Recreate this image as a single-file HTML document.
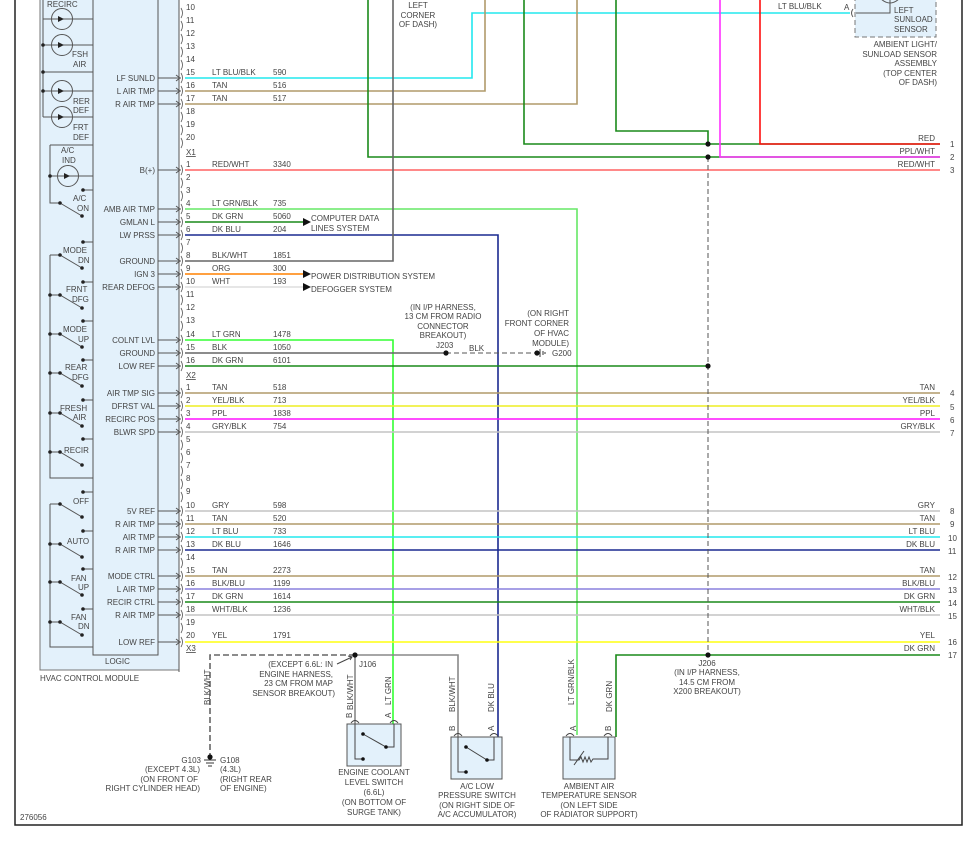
<!DOCTYPE html>
<html><head><meta charset="utf-8"><style>
html,body{margin:0;padding:0;background:#fff;}
svg{display:block;}
text{font-family:"Liberation Sans",Arial,sans-serif;font-size:8px;fill:#444;}
.r{text-anchor:end;}
.m{text-anchor:middle;}
</style></head><body>
<svg width="967" height="841" viewBox="0 0 967 841" xmlns="http://www.w3.org/2000/svg">
<rect x="0" y="0" width="967" height="841" fill="#fff"/>
<!-- frame -->
<path d="M15,0 V825 H962 V0" fill="none" stroke="#222" stroke-width="1.5"/>

<!-- module -->
<rect x="40" y="-2" width="139" height="672" fill="#e3f1fb" stroke="#777" stroke-width="1"/>
<rect x="93" y="-2" width="65" height="657" fill="#e3f1fb" stroke="#555" stroke-width="1"/>
<text x="105" y="664">LOGIC</text>
<text x="40" y="681">HVAC CONTROL MODULE</text>

<!-- LED section -->
<g stroke="#555" fill="none" stroke-width="1">
<path d="M43,0 V72 M43,19 H93 M43,45 H93 M43,72 H93 M43,91 H93 M43,117 H93 M43,91 V117"/>
<path d="M43,72 V91"/>
<circle cx="62" cy="19" r="10.5"/><circle cx="62" cy="45" r="10.5"/>
<circle cx="62" cy="91" r="10.5"/><circle cx="62" cy="117" r="10.5"/>
<path d="M50,145 H93 M50,145 V203 H60 M50,176 H93 M83,190 H93"/>
<circle cx="68" cy="176" r="10.5"/>
<path d="M60,203 L82,216"/>
</g>
<g fill="#222">
<circle cx="43" cy="45" r="1.8"/><circle cx="43" cy="72" r="1.8"/><circle cx="43" cy="91" r="1.8"/>
<circle cx="50" cy="176" r="1.8"/><circle cx="83" cy="190" r="1.8"/><circle cx="60" cy="203" r="1.8"/><circle cx="82" cy="216" r="1.8"/>
<path d="M58,16 l6,3 l-6,3z M58,42 l6,3 l-6,3z M58,88 l6,3 l-6,3z M58,114 l6,3 l-6,3z M64,173 l6,3 l-6,3z"/>
</g>
<text x="47" y="7">RECIRC</text>
<text x="72" y="57">FSH</text><text x="73" y="67">AIR</text>
<text x="73" y="104">RER</text><text x="73" y="113">DEF</text>
<text x="73" y="130">FRT</text><text x="73" y="140">DEF</text>
<text x="61" y="153">A/C</text><text x="62" y="163">IND</text>
<text x="73" y="201">A/C</text><text x="77" y="211">ON</text>

<!-- switch groups -->
<g stroke="#555" fill="none" stroke-width="1">
<path d="M50,255 V478 H93 M50,504 V647 H93"/>
<path d="M83,242 H93 M50,255 H60 L82,268
M83,282 H93 M50,295 H60 L82,308
M83,321 H93 M50,334 H60 L82,347
M83,360 H93 M50,373 H60 L82,386
M83,400 H93 M50,413 H60 L82,426
M83,439 H93 M50,452 H60 L82,465
M83,492 H93 M50,504 H60 L82,517
M83,531 H93 M50,544 H60 L82,557
M83,569 H93 M50,582 H60 L82,595
M83,609 H93 M50,622 H60 L82,635"/>
</g>
<g fill="#222">
<circle cx="83" cy="242" r="1.8"/><circle cx="60" cy="255" r="1.8"/><circle cx="82" cy="268" r="1.8"/>
<circle cx="83" cy="282" r="1.8"/><circle cx="60" cy="295" r="1.8"/><circle cx="82" cy="308" r="1.8"/><circle cx="50" cy="295" r="1.8"/>
<circle cx="83" cy="321" r="1.8"/><circle cx="60" cy="334" r="1.8"/><circle cx="82" cy="347" r="1.8"/><circle cx="50" cy="334" r="1.8"/>
<circle cx="83" cy="360" r="1.8"/><circle cx="60" cy="373" r="1.8"/><circle cx="82" cy="386" r="1.8"/><circle cx="50" cy="373" r="1.8"/>
<circle cx="83" cy="400" r="1.8"/><circle cx="60" cy="413" r="1.8"/><circle cx="82" cy="426" r="1.8"/><circle cx="50" cy="413" r="1.8"/>
<circle cx="83" cy="439" r="1.8"/><circle cx="60" cy="452" r="1.8"/><circle cx="82" cy="465" r="1.8"/><circle cx="50" cy="452" r="1.8"/>
<circle cx="83" cy="492" r="1.8"/><circle cx="60" cy="504" r="1.8"/><circle cx="82" cy="517" r="1.8"/>
<circle cx="83" cy="531" r="1.8"/><circle cx="60" cy="544" r="1.8"/><circle cx="82" cy="557" r="1.8"/><circle cx="50" cy="544" r="1.8"/>
<circle cx="83" cy="569" r="1.8"/><circle cx="60" cy="582" r="1.8"/><circle cx="82" cy="595" r="1.8"/><circle cx="50" cy="582" r="1.8"/>
<circle cx="83" cy="609" r="1.8"/><circle cx="60" cy="622" r="1.8"/><circle cx="82" cy="635" r="1.8"/><circle cx="50" cy="622" r="1.8"/>
</g>
<text x="63" y="253">MODE</text><text x="78" y="263">DN</text>
<text x="66" y="292">FRNT</text><text x="72" y="302">DFG</text>
<text x="63" y="332">MODE</text><text x="78" y="342">UP</text>
<text x="65" y="370">REAR</text><text x="72" y="380">DFG</text>
<text x="60" y="411">FRESH</text><text x="73" y="420">AIR</text>
<text x="64" y="453">RECIR</text>
<text x="73" y="504">OFF</text>
<text x="67" y="544">AUTO</text>
<text x="71" y="581">FAN</text><text x="78" y="590">UP</text>
<text x="71" y="620">FAN</text><text x="78" y="629">DN</text>

<!-- module pin labels & arrows -->
<g stroke="#555" stroke-width="1" fill="none">
<path d="M158,78H181M158,91H181M158,104H181M158,170H181M158,209H181M158,222H181M158,235H181M158,261H181M158,274H181M158,287H181M158,340H181M158,353H181M158,366H181M158,393H181M158,406H181M158,419H181M158,432H181M158,511H181M158,524H181M158,537H181M158,550H181M158,576H181M158,589H181M158,602H181M158,615H181M158,642H181"/>
<path d="M176,75l4,3l-4,3M176,88l4,3l-4,3M176,101l4,3l-4,3M176,167l4,3l-4,3M176,206l4,3l-4,3M176,219l4,3l-4,3M176,232l4,3l-4,3M176,258l4,3l-4,3M176,271l4,3l-4,3M176,284l4,3l-4,3M176,337l4,3l-4,3M176,350l4,3l-4,3M176,363l4,3l-4,3M176,390l4,3l-4,3M176,403l4,3l-4,3M176,416l4,3l-4,3M176,429l4,3l-4,3M176,508l4,3l-4,3M176,521l4,3l-4,3M176,534l4,3l-4,3M176,547l4,3l-4,3M176,573l4,3l-4,3M176,586l4,3l-4,3M176,599l4,3l-4,3M176,612l4,3l-4,3M176,639l4,3l-4,3"/>
<path d="M179,-3V672"/>
</g>
<g class="r">
<text class="r" x="155" y="81">LF SUNLD</text><text class="r" x="155" y="94">L AIR TMP</text><text class="r" x="155" y="107">R AIR TMP</text>
<text class="r" x="155" y="173">B(+)</text><text class="r" x="155" y="212">AMB AIR TMP</text><text class="r" x="155" y="225">GMLAN L</text><text class="r" x="155" y="238">LW PRSS</text>
<text class="r" x="155" y="264">GROUND</text><text class="r" x="155" y="277">IGN 3</text><text class="r" x="155" y="290">REAR DEFOG</text>
<text class="r" x="155" y="343">COLNT LVL</text><text class="r" x="155" y="356">GROUND</text><text class="r" x="155" y="369">LOW REF</text>
<text class="r" x="155" y="396">AIR TMP SIG</text><text class="r" x="155" y="409">DFRST VAL</text><text class="r" x="155" y="422">RECIRC POS</text><text class="r" x="155" y="435">BLWR SPD</text>
<text class="r" x="155" y="514">5V REF</text><text class="r" x="155" y="527">R AIR TMP</text><text class="r" x="155" y="540">AIR TMP</text><text class="r" x="155" y="553">R AIR TMP</text>
<text class="r" x="155" y="579">MODE CTRL</text><text class="r" x="155" y="592">L AIR TMP</text><text class="r" x="155" y="605">RECIR CTRL</text><text class="r" x="155" y="618">R AIR TMP</text>
<text class="r" x="155" y="645">LOW REF</text>
</g>

<!-- connector pin numbers -->
<g>
<text x="186" y="10">10</text><text x="186" y="23">11</text><text x="186" y="36">12</text><text x="186" y="49">13</text><text x="186" y="62">14</text>
<text x="186" y="75">15</text><text x="186" y="88">16</text><text x="186" y="101">17</text><text x="186" y="114">18</text><text x="186" y="127">19</text><text x="186" y="140">20</text>
<text x="186" y="155" text-decoration="underline">X1</text>
<text x="186" y="167">1</text><text x="186" y="180">2</text><text x="186" y="193">3</text><text x="186" y="206">4</text><text x="186" y="219">5</text><text x="186" y="232">6</text><text x="186" y="245">7</text><text x="186" y="258">8</text><text x="186" y="271">9</text><text x="186" y="284">10</text><text x="186" y="297">11</text><text x="186" y="310">12</text><text x="186" y="323">13</text><text x="186" y="337">14</text><text x="186" y="350">15</text><text x="186" y="363">16</text>
<text x="186" y="378" text-decoration="underline">X2</text>
<text x="186" y="390">1</text><text x="186" y="403">2</text><text x="186" y="416">3</text><text x="186" y="429">4</text><text x="186" y="442">5</text><text x="186" y="455">6</text><text x="186" y="468">7</text><text x="186" y="481">8</text><text x="186" y="494">9</text><text x="186" y="508">10</text><text x="186" y="521">11</text><text x="186" y="534">12</text><text x="186" y="547">13</text><text x="186" y="560">14</text><text x="186" y="573">15</text><text x="186" y="586">16</text><text x="186" y="599">17</text><text x="186" y="612">18</text><text x="186" y="625">19</text><text x="186" y="638">20</text>
<text x="186" y="651" text-decoration="underline">X3</text>
</g>
<g fill="none" stroke="#555" stroke-width="0.8">
<path d="M181,8q3,5 0,10M181,21q3,5 0,10M181,34q3,5 0,10M181,47q3,5 0,10M181,60q3,5 0,10M181,73q3,5 0,10M181,86q3,5 0,10M181,99q3,5 0,10M181,112q3,5 0,10M181,125q3,5 0,10M181,138q3,5 0,10
M181,165q3,5 0,10M181,178q3,5 0,10M181,191q3,5 0,10M181,204q3,5 0,10M181,217q3,5 0,10M181,230q3,5 0,10M181,243q3,5 0,10M181,256q3,5 0,10M181,269q3,5 0,10M181,282q3,5 0,10M181,295q3,5 0,10M181,308q3,5 0,10M181,321q3,5 0,10M181,335q3,5 0,10M181,348q3,5 0,10M181,361q3,5 0,10
M181,388q3,5 0,10M181,401q3,5 0,10M181,414q3,5 0,10M181,427q3,5 0,10M181,440q3,5 0,10M181,453q3,5 0,10M181,466q3,5 0,10M181,479q3,5 0,10M181,492q3,5 0,10M181,506q3,5 0,10M181,519q3,5 0,10M181,532q3,5 0,10M181,545q3,5 0,10M181,558q3,5 0,10M181,571q3,5 0,10M181,584q3,5 0,10M181,597q3,5 0,10M181,610q3,5 0,10M181,623q3,5 0,10M181,637q3,5 0,10"/>
</g>

<!-- wire names & numbers -->
<g>
<text x="212" y="75">LT BLU/BLK</text><text x="273" y="75">590</text>
<text x="212" y="88">TAN</text><text x="273" y="88">516</text>
<text x="212" y="101">TAN</text><text x="273" y="101">517</text>
<text x="212" y="167">RED/WHT</text><text x="273" y="167">3340</text>
<text x="212" y="206">LT GRN/BLK</text><text x="273" y="206">735</text>
<text x="212" y="219">DK GRN</text><text x="273" y="219">5060</text>
<text x="212" y="232">DK BLU</text><text x="273" y="232">204</text>
<text x="212" y="258">BLK/WHT</text><text x="273" y="258">1851</text>
<text x="212" y="271">ORG</text><text x="273" y="271">300</text>
<text x="212" y="284">WHT</text><text x="273" y="284">193</text>
<text x="212" y="337">LT GRN</text><text x="273" y="337">1478</text>
<text x="212" y="350">BLK</text><text x="273" y="350">1050</text>
<text x="212" y="363">DK GRN</text><text x="273" y="363">6101</text>
<text x="212" y="390">TAN</text><text x="273" y="390">518</text>
<text x="212" y="403">YEL/BLK</text><text x="273" y="403">713</text>
<text x="212" y="416">PPL</text><text x="273" y="416">1838</text>
<text x="212" y="429">GRY/BLK</text><text x="273" y="429">754</text>
<text x="212" y="508">GRY</text><text x="273" y="508">598</text>
<text x="212" y="521">TAN</text><text x="273" y="521">520</text>
<text x="212" y="534">LT BLU</text><text x="273" y="534">733</text>
<text x="212" y="547">DK BLU</text><text x="273" y="547">1646</text>
<text x="212" y="573">TAN</text><text x="273" y="573">2273</text>
<text x="212" y="586">BLK/BLU</text><text x="273" y="586">1199</text>
<text x="212" y="599">DK GRN</text><text x="273" y="599">1614</text>
<text x="212" y="612">WHT/BLK</text><text x="273" y="612">1236</text>
<text x="212" y="638">YEL</text><text x="273" y="638">1791</text>
</g>

<!-- wires -->
<g fill="none" stroke-width="1.6">
<path d="M185,78H472V13H850" stroke="#22e8ee"/>
<path d="M185,91H485V-2" stroke="#b09a6a"/>
<path d="M185,104H577V-2" stroke="#b09a6a"/>
<path d="M368,-2V157H940" stroke="#1a8a1a"/>
<path d="M524,-2V144H940" stroke="#1a8a1a"/>
<path d="M616,-2V131H708V144" stroke="#1a8a1a"/>
<path d="M760,-2V144H940" stroke="#ff1010"/>
<path d="M720,-2V157H940" stroke="#ff30ff"/>
<path d="M185,170H940" stroke="#ff6262"/>
<path d="M185,209H577V735" stroke="#66e866"/>
<path d="M185,222H303" stroke="#1a8a1a"/>
<path d="M185,235H498V737" stroke="#1a2a90"/>
<path d="M185,261H393V-2" stroke="#666"/>
<path d="M185,274H303" stroke="#ff8000"/>
<path d="M185,287H303" stroke="#ddd"/>
<path d="M185,340H393V724" stroke="#33ff33"/>
<path d="M185,353H446" stroke="#666"/>
<path d="M185,366H708" stroke="#1a8a1a"/>
<path d="M185,393H940" stroke="#b09a6a"/>
<path d="M185,406H940" stroke="#eeee22"/>
<path d="M185,419H940" stroke="#ff10ff"/>
<path d="M185,432H940" stroke="#c4c4c4"/>
<path d="M185,511H940" stroke="#c4c4c4"/>
<path d="M185,524H940" stroke="#b09a6a"/>
<path d="M185,537H940" stroke="#22e8ee"/>
<path d="M185,550H940" stroke="#1a2a90"/>
<path d="M185,576H940" stroke="#b09a6a"/>
<path d="M185,589H940" stroke="#8a80dd"/>
<path d="M185,602H940" stroke="#1a8a1a"/>
<path d="M185,615H940" stroke="#c4c4c4"/>
<path d="M185,642H940" stroke="#ffff10"/>
<path d="M940,655H616V737" stroke="#1a8a1a"/>
<path d="M355,655H458V737" stroke="#888"/>
<path d="M355,655V724" stroke="#888"/>
</g>
<g fill="none" stroke="#555" stroke-width="1" stroke-dasharray="5,3">
<path d="M446,353H537"/>
<path d="M708,157V652"/>
</g>
<path d="M355,655H210V755" fill="none" stroke="#666" stroke-width="1.6" stroke-dasharray="6,3"/>
<g fill="#111">
<circle cx="708" cy="144" r="2.6"/><circle cx="708" cy="157" r="2.6"/><circle cx="708" cy="366" r="2.6"/><circle cx="708" cy="655" r="2.6"/>
<circle cx="446" cy="353" r="2.6"/><circle cx="537" cy="353" r="2.6"/><circle cx="355" cy="655" r="2.6"/><circle cx="210" cy="757" r="2.6"/>
<path d="M303,218l8,4l-8,4z M303,270l8,4l-8,4z M303,283l8,4l-8,4z"/>
</g>
<path d="M540,349v8 M543,351v4 M545,352v2 M204,760h12 M206,763h8 M208,766h4" stroke="#333" stroke-width="1"/>

<text x="311" y="221">COMPUTER DATA</text><text x="311" y="231">LINES SYSTEM</text>
<text x="311" y="279">POWER DISTRIBUTION SYSTEM</text>
<text x="311" y="292">DEFOGGER SYSTEM</text>
<text class="m" x="418" y="8">LEFT</text><text class="m" x="418" y="18">CORNER</text><text class="m" x="418" y="27">OF DASH)</text>

<text class="m" x="443" y="310">(IN I/P HARNESS,</text><text class="m" x="443" y="319">13 CM FROM RADIO</text><text class="m" x="443" y="329">CONNECTOR</text><text class="m" x="443" y="338">BREAKOUT)</text>
<text x="436" y="348">J203</text><text x="469" y="351">BLK</text>
<text class="r" x="569" y="316">(ON RIGHT</text><text class="r" x="569" y="326">FRONT CORNER</text><text class="r" x="569" y="336">OF HVAC</text><text class="r" x="569" y="346">MODULE)</text>
<text x="552" y="356">G200</text>

<!-- sunload sensor -->
<rect x="855" y="-5" width="81" height="42" fill="#e3f1fb" stroke="#777" stroke-dasharray="5,3"/>
<path d="M853,9q-3,4 0,8 M856,13H890V0" fill="none" stroke="#555"/>
<path d="M880,-2q10,10 20,0" fill="none" stroke="#555"/>
<text x="844" y="10">A</text><text x="778" y="9">LT BLU/BLK</text>
<text x="894" y="13">LEFT</text><text x="894" y="22">SUNLOAD</text><text x="894" y="32">SENSOR</text>
<text class="r" x="937" y="47">AMBIENT LIGHT/</text><text class="r" x="937" y="57">SUNLOAD SENSOR</text><text class="r" x="937" y="66">ASSEMBLY</text><text class="r" x="937" y="76">(TOP CENTER</text><text class="r" x="937" y="85">OF DASH)</text>

<!-- right labels -->
<g>
<text class="r" x="935" y="141">RED</text><text x="950" y="147">1</text>
<text class="r" x="935" y="154">PPL/WHT</text><text x="950" y="160">2</text>
<text class="r" x="935" y="167">RED/WHT</text><text x="950" y="173">3</text>
<text class="r" x="935" y="390">TAN</text><text x="950" y="396">4</text>
<text class="r" x="935" y="403">YEL/BLK</text><text x="950" y="410">5</text>
<text class="r" x="935" y="416">PPL</text><text x="950" y="423">6</text>
<text class="r" x="935" y="429">GRY/BLK</text><text x="950" y="436">7</text>
<text class="r" x="935" y="508">GRY</text><text x="950" y="514">8</text>
<text class="r" x="935" y="521">TAN</text><text x="950" y="527">9</text>
<text class="r" x="935" y="534">LT BLU</text><text x="948" y="541">10</text>
<text class="r" x="935" y="547">DK BLU</text><text x="948" y="554">11</text>
<text class="r" x="935" y="573">TAN</text><text x="948" y="580">12</text>
<text class="r" x="935" y="586">BLK/BLU</text><text x="948" y="593">13</text>
<text class="r" x="935" y="599">DK GRN</text><text x="948" y="606">14</text>
<text class="r" x="935" y="612">WHT/BLK</text><text x="948" y="619">15</text>
<text class="r" x="935" y="638">YEL</text><text x="948" y="645">16</text>
<text class="r" x="935" y="651">DK GRN</text><text x="948" y="658">17</text>
</g>

<!-- bottom texts -->
<text transform="translate(210,705) rotate(-90)">BLK/WHT</text>
<text class="r" x="201" y="763">G103</text><text class="r" x="200" y="772">(EXCEPT 4.3L)</text><text class="r" x="198" y="782">(ON FRONT OF</text><text class="r" x="200" y="791">RIGHT CYLINDER HEAD)</text>
<text x="220" y="763">G108</text><text x="220" y="772">(4.3L)</text><text x="220" y="782">(RIGHT REAR</text><text x="220" y="791">OF ENGINE)</text>
<text class="r" x="333" y="667">(EXCEPT 6.6L: IN</text><text class="r" x="333" y="677">ENGINE HARNESS,</text><text class="r" x="333" y="686">23 CM FROM MAP</text><text class="r" x="335" y="696">SENSOR BREAKOUT)</text>
<path d="M337,664L352,657 M348,656l4,1l-2,3" stroke="#444" fill="none"/>
<text x="359" y="667">J106</text>
<text class="m" x="707" y="666">J206</text><text class="m" x="707" y="675">(IN I/P HARNESS,</text><text class="m" x="707" y="685">14.5 CM FROM</text><text class="m" x="707" y="694">X200 BREAKOUT)</text>
<text x="20" y="820">276056</text>

<!-- coolant switch -->
<rect x="347" y="724" width="54" height="42" fill="#e3f1fb" stroke="#555"/>
<g fill="none" stroke="#444"><path d="M355,724V759H363M394,724V747H386L363,734M351,723q4,-5 8,0M390,723q4,-5 8,0"/></g>
<circle cx="363" cy="759" r="1.8" fill="#111"/><circle cx="386" cy="747" r="1.8" fill="#111"/><circle cx="363" cy="734" r="1.8" fill="#111"/>
<text transform="translate(352,718) rotate(-90)">B</text><text transform="translate(391,718) rotate(-90)">A</text>
<text transform="translate(353,710) rotate(-90)">BLK/WHT</text><text transform="translate(391,705) rotate(-90)">LT GRN</text>
<text class="m" x="374" y="775">ENGINE COOLANT</text><text class="m" x="374" y="785">LEVEL SWITCH</text><text class="m" x="374" y="795">(6.6L)</text><text class="m" x="374" y="805">(ON BOTTOM OF</text><text class="m" x="374" y="815">SURGE TANK)</text>

<!-- a/c switch -->
<rect x="451" y="737" width="51" height="42" fill="#e3f1fb" stroke="#555"/>
<g fill="none" stroke="#444"><path d="M458,737V772H466M494,737V760H487L466,747M454,736q4,-5 8,0M490,736q4,-5 8,0"/></g>
<circle cx="466" cy="772" r="1.8" fill="#111"/><circle cx="487" cy="760" r="1.8" fill="#111"/><circle cx="466" cy="747" r="1.8" fill="#111"/>
<text transform="translate(455,731) rotate(-90)">B</text><text transform="translate(494,731) rotate(-90)">A</text>
<text transform="translate(455,712) rotate(-90)">BLK/WHT</text><text transform="translate(494,712) rotate(-90)">DK BLU</text>
<text class="m" x="477" y="789">A/C LOW</text><text class="m" x="477" y="798">PRESSURE SWITCH</text><text class="m" x="477" y="808">(ON RIGHT SIDE OF</text><text class="m" x="477" y="817">A/C ACCUMULATOR)</text>

<!-- ambient sensor -->
<rect x="563" y="737" width="52" height="42" fill="#e3f1fb" stroke="#555"/>
<g fill="none" stroke="#444"><path d="M570,737V760H579l2,-3l2,5l2,-5l2,5l2,-5l2,5l2,-3H608V737M574,765l10,-14M566,736q4,-5 8,0M604,736q4,-5 8,0"/></g>
<text transform="translate(576,731) rotate(-90)">A</text><text transform="translate(611,731) rotate(-90)">B</text>
<text transform="translate(574,705) rotate(-90)">LT GRN/BLK</text><text transform="translate(612,712) rotate(-90)">DK GRN</text>
<text class="m" x="589" y="789">AMBIENT AIR</text><text class="m" x="589" y="798">TEMPERATURE SENSOR</text><text class="m" x="589" y="808">(ON LEFT SIDE</text><text class="m" x="589" y="817">OF RADIATOR SUPPORT)</text>
</svg>
</body></html>
